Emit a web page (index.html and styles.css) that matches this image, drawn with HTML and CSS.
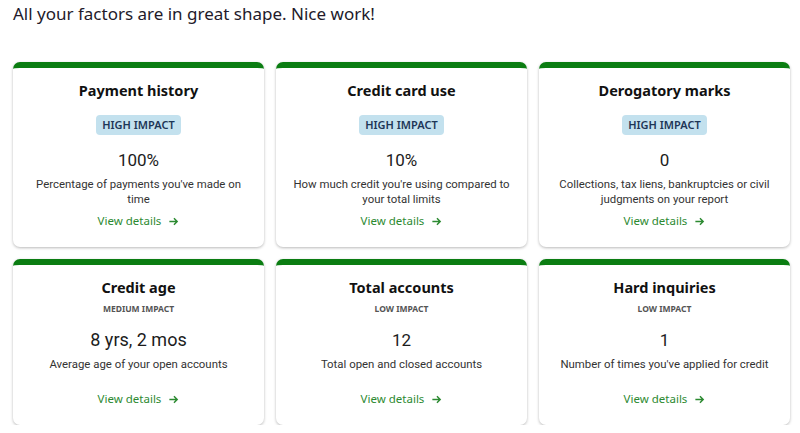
FILE: index.html
```
<!DOCTYPE html>
<html lang="en">
<head>
    <meta charset="UTF-8">
    <meta name="viewport" content="width=device-width, initial-scale=1.0">
    <title>Credit factors</title>
    <link rel="stylesheet" href="styles.css">
</head>
<body>
    <h4 class="headline">All your factors are in great shape. Nice work!</h4>

    <div class="factors">
        <div class="card">
            <div class="title">Payment history</div>
            <div class="impact high">High impact</div>
            <div class="value">100%</div>
            <p class="desc">Percentage of payments you've made on time</p>
            <a class="details" href="#">View details
                <svg viewBox="0 0 12 12" width="11" height="11"><path d="M1.5 6h8.5M6.5 2.5 10 6l-3.5 3.5" fill="none" stroke="currentColor" stroke-width="1.6"/></svg>
            </a>
        </div>
        <div class="card">
            <div class="title">Credit card use</div>
            <div class="impact high">High impact</div>
            <div class="value">10%</div>
            <p class="desc">How much credit you're using compared to your total limits</p>
            <a class="details" href="#">View details
                <svg viewBox="0 0 12 12" width="11" height="11"><path d="M1.5 6h8.5M6.5 2.5 10 6l-3.5 3.5" fill="none" stroke="currentColor" stroke-width="1.6"/></svg>
            </a>
        </div>
        <div class="card">
            <div class="title">Derogatory marks</div>
            <div class="impact high">High impact</div>
            <div class="value">0</div>
            <p class="desc">Collections, tax liens, bankruptcies or civil judgments on your report</p>
            <a class="details" href="#">View details
                <svg viewBox="0 0 12 12" width="11" height="11"><path d="M1.5 6h8.5M6.5 2.5 10 6l-3.5 3.5" fill="none" stroke="currentColor" stroke-width="1.6"/></svg>
            </a>
        </div>

        <div class="card">
            <div class="title">Credit age</div>
            <div class="impact">Medium impact</div>
            <div class="value big">8 yrs, 2 mos</div>
            <p class="desc">Average age of your open accounts</p>
            <a class="details" href="#">View details
                <svg viewBox="0 0 12 12" width="11" height="11"><path d="M1.5 6h8.5M6.5 2.5 10 6l-3.5 3.5" fill="none" stroke="currentColor" stroke-width="1.6"/></svg>
            </a>
        </div>
        <div class="card">
            <div class="title">Total accounts</div>
            <div class="impact">Low impact</div>
            <div class="value">12</div>
            <p class="desc">Total open and closed accounts</p>
            <a class="details" href="#">View details
                <svg viewBox="0 0 12 12" width="11" height="11"><path d="M1.5 6h8.5M6.5 2.5 10 6l-3.5 3.5" fill="none" stroke="currentColor" stroke-width="1.6"/></svg>
            </a>
        </div>
        <div class="card">
            <div class="title">Hard inquiries</div>
            <div class="impact">Low impact</div>
            <div class="value">1</div>
            <p class="desc">Number of times you've applied for credit</p>
            <a class="details" href="#">View details
                <svg viewBox="0 0 12 12" width="11" height="11"><path d="M1.5 6h8.5M6.5 2.5 10 6l-3.5 3.5" fill="none" stroke="currentColor" stroke-width="1.6"/></svg>
            </a>
        </div>
    </div>
</body>
</html>
```

FILE: styles.css
```
:root {
    --green: #0b7d12;
    --link-green: #2c8a31;
    --text: #1c1c1c;
}

body {
    margin: 0;
    padding: 0 10px 0 13px;
    font-family: "Noto Sans", "Liberation Sans", sans-serif;
    color: var(--text);
    background-color: #fff;
}

.headline {
    margin: 0;
    padding-top: 3px;
    font-size: 17px;
    font-weight: 400;
    line-height: 22px;
    color: #231a2a;
}

.factors {
    margin-top: 37px;
    width: 777px;
    display: grid;
    grid-template-columns: repeat(3, 1fr);
    gap: 12px;
}

.card {
    display: flex;
    flex-direction: column;
    align-items: center;
    text-align: center;
    border-top: 6px solid var(--green);
    border-radius: 7px;
    box-shadow: 0 1px 3px rgba(0, 0, 0, 0.28);
    padding: 12px 12px 18px;
}

.title {
    font-size: 14.5px;
    font-weight: 700;
    line-height: 20px;
    color: #111;
}

.impact {
    margin-top: 6px;
    font-size: 8.5px;
    font-weight: 700;
    text-transform: uppercase;
    color: #555;
    line-height: 12px;
}

.impact.high {
    margin-top: 15px;
    padding: 0 6px;
    font-size: 11px;
    font-weight: 600;
    line-height: 20px;
    color: #1d3657;
    background-color: #c3e1ee;
    border-radius: 4px;
}

.value {
    margin-top: 14px;
    font-family: Roboto, "Noto Sans", sans-serif;
    font-size: 17px;
    line-height: 22px;
}

.value.big {
    font-size: 18px;
}

.desc {
    margin: 6px 0 0;
    min-height: 28px;
    font-family: Roboto, "Noto Sans", sans-serif;
    font-size: 11.4px;
    line-height: 15px;
    color: #333;
}

.details {
    margin-top: 6px;
    display: flex;
    align-items: center;
    gap: 7px;
    font-size: 11.5px;
    line-height: 16px;
    color: var(--link-green);
    text-decoration: none;
}
```
